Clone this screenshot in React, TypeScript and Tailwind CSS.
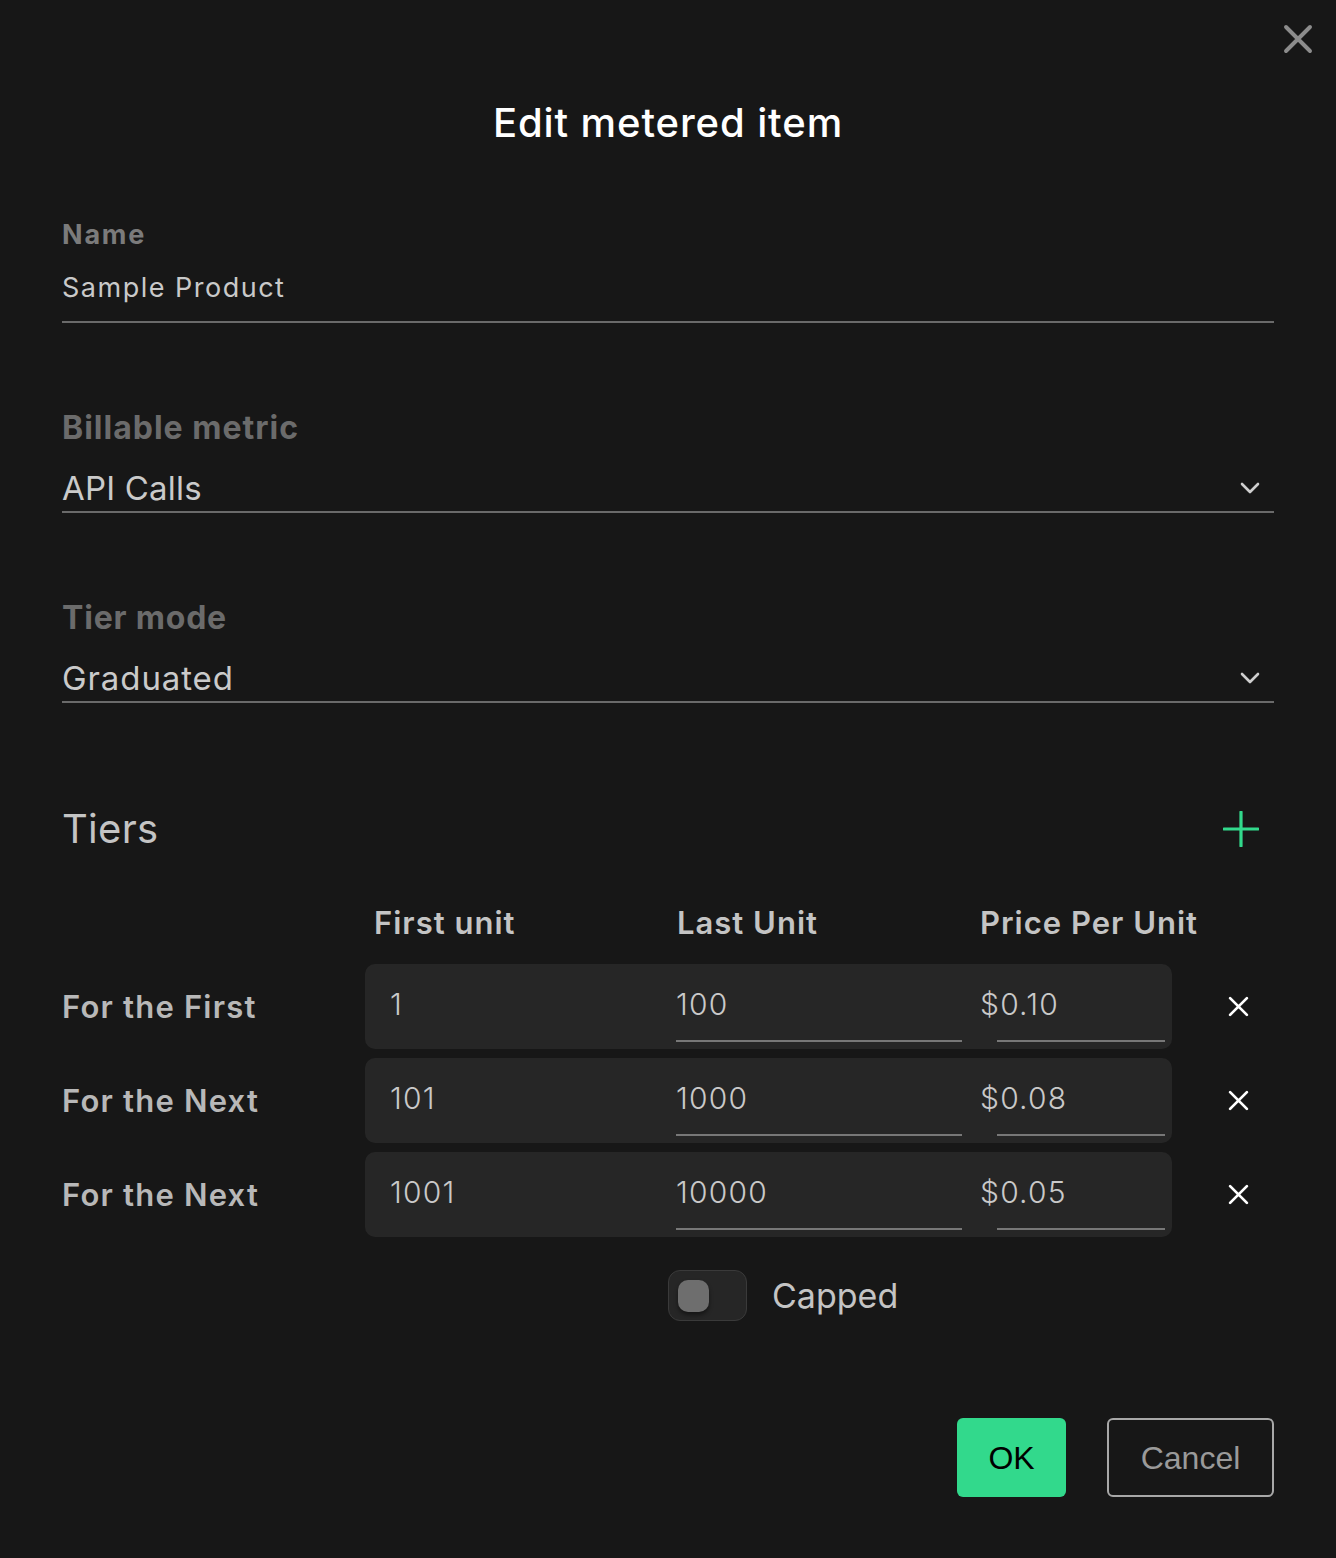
import { useState } from "react";

// Edit metered item dialog
const tiers = [
  { label: "For the First", first: "1", last: "100", price: "$0.10" },
  { label: "For the Next", first: "101", last: "1000", price: "$0.08" },
  { label: "For the Next", first: "1001", last: "10000", price: "$0.05" },
];

function Chevron() {
  return (
    <svg width="20" height="12" viewBox="0 0 20 12" fill="none">
      <path d="M2 2l8 8 8-8" stroke="#cfcfcf" strokeWidth="2.6" strokeLinecap="round" strokeLinejoin="round" />
    </svg>
  );
}

function Cross({ size, color, width }: { size: number; color: string; width: number }) {
  return (
    <svg width={size} height={size} viewBox="0 0 20 20" fill="none">
      <path d="M2 2l16 16M18 2L2 18" stroke={color} strokeWidth={width} strokeLinecap="round" />
    </svg>
  );
}

export default function App() {
  const [capped, setCapped] = useState(false);

  return (
    <div className="relative w-[1336px] h-[1558px] bg-[#171717] font-['Inter',sans-serif]">
      {/* Close */}
      <button className="absolute top-[24px] right-[23px] p-0">
        <Cross size={30} color="#8c8c8c" width={2.6} />
      </button>

      <div className="px-[62px]">
        <h1 className="pt-[96px] text-center text-[40px] leading-[54px] font-medium text-white tracking-[0.9px]">
          Edit metered item
        </h1>

        {/* Name */}
        <div className="mt-[69px] text-[27px] leading-[32px] font-bold text-[#7b7b7b] tracking-[1.8px]">Name</div>
        <div className="mt-[19px] border-b-2 border-[#6a6a6a] pb-[15px]">
          <div className="text-[27px] leading-[36px] text-[#c9c9c9] tracking-[1.5px]">Sample Product</div>
        </div>

        {/* Billable metric */}
        <div className="mt-[86px] text-[32px] leading-[38px] font-bold text-[#6b6b6b] tracking-[1px]">Billable metric</div>
        <div className="mt-[21px] flex items-center justify-between border-b-2 border-[#6a6a6a] pb-[3px] pr-[14px]">
          <div className="text-[33px] leading-[40px] text-[#cacaca] tracking-[0.2px]">API Calls</div>
          <Chevron />
        </div>

        {/* Tier mode */}
        <div className="mt-[86px] text-[32px] leading-[38px] font-bold text-[#6b6b6b] tracking-[0.8px]">Tier mode</div>
        <div className="mt-[21px] flex items-center justify-between border-b-2 border-[#6a6a6a] pb-[3px] pr-[14px]">
          <div className="text-[33px] leading-[40px] text-[#cacaca] tracking-[0.9px]">Graduated</div>
          <Chevron />
        </div>

        {/* Tiers */}
        <div className="mt-[102px] flex items-center justify-between pr-[15px]">
          <div className="text-[40px] leading-[48px] text-[#c4c4c4] tracking-[0.3px]">Tiers</div>
          <svg width="36" height="36" viewBox="0 0 36 36" fill="none">
            <path d="M18 1v34M1 18h34" stroke="#32d98c" strokeWidth="3.2" strokeLinecap="round" />
          </svg>
        </div>

        <div className="mt-[51px] flex text-[31px] leading-[38px] font-semibold text-[#c4c4c4] tracking-[1px]">
          <div className="w-[312px] shrink-0" />
          <div className="w-[303px] shrink-0">First unit</div>
          <div className="w-[303px] shrink-0">Last Unit</div>
          <div>Price Per Unit</div>
        </div>

        <div className="mt-[22px] flex flex-col gap-[9px]">
          {tiers.map((t, i) => (
            <div key={i} className="flex items-center">
              <div className="w-[303px] shrink-0 text-[31px] leading-[38px] font-semibold text-[#b8b8b8] tracking-[1.2px]">
                {t.label}
              </div>
              <div className="flex w-[807px] h-[85px] shrink-0 rounded-[10px] bg-[#262626] text-[30px] leading-[36px] font-light text-[#c9c9c9] tracking-[1.2px]">
                <div className="w-[311px] shrink-0 pl-[25px] pt-[22px]">{t.first}</div>
                <div className="w-[304px] shrink-0 pt-[22px]">
                  <div>{t.last}</div>
                  <div className="mt-[18px] h-[2px] w-[286px] bg-[#777]" />
                </div>
                <div className="flex-1 pt-[22px]">
                  <div>{t.price}</div>
                  <div className="mt-[18px] ml-[17px] h-[2px] w-[168px] bg-[#777]" />
                </div>
              </div>
              <div className="flex-1 flex justify-end pr-[25px]">
                <Cross size={21} color="#ffffff" width={2.6} />
              </div>
            </div>
          ))}
        </div>

        {/* Capped */}
        <div className="mt-[33px] ml-[606px] flex items-center gap-[25px]">
          <button
            onClick={() => setCapped(!capped)}
            className={`flex w-[79px] h-[51px] rounded-[12px] border border-[#3a3a3a] bg-[#262626] p-[9px] ${capped ? "justify-end" : "justify-start"}`}
          >
            <span className="block w-[31px] h-[32px] rounded-[10px] bg-[#6e6e6e] shadow-[0_3px_4px_rgba(0,0,0,0.45)]" />
          </button>
          <span className="text-[34px] leading-[42px] text-[#c4c4c4]">Capped</span>
        </div>

        {/* Actions */}
        <div className="mt-[97px] flex justify-end gap-[41px] font-['Liberation_Sans',Arial,sans-serif]">
          <button className="w-[109px] h-[79px] rounded-[6px] bg-[#32d98c] text-[32px] text-black">OK</button>
          <button className="w-[167px] h-[79px] rounded-[6px] border-2 border-[#a8a8a8] text-[32px] text-[#9a9a9a]">
            Cancel
          </button>
        </div>
      </div>
    </div>
  );
}
